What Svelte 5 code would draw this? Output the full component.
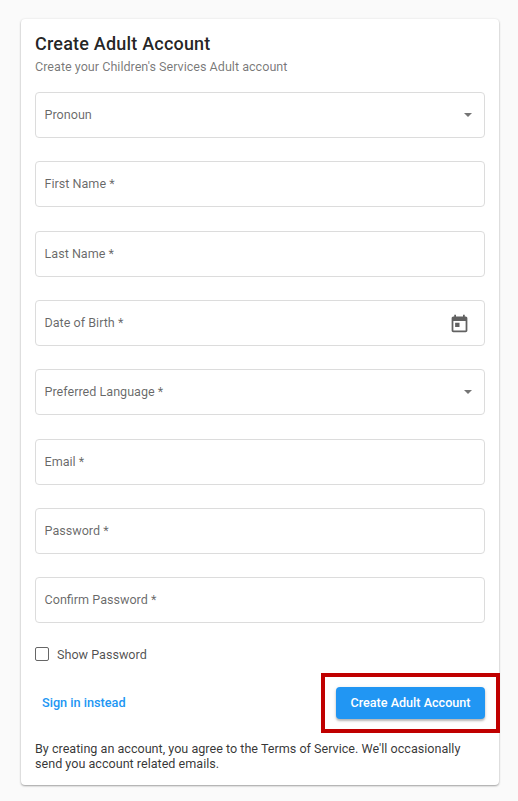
<script>
  const fields = [
    { label: "Pronoun", icon: "caret" },
    { label: "First Name *" },
    { label: "Last Name *" },
    { label: "Date of Birth *", icon: "calendar" },
    { label: "Preferred Language *", icon: "caret" },
    { label: "Email *" },
    { label: "Password *" },
    { label: "Confirm Password *" }
  ];
</script>

<div class="page">
  <main class="card">
    <h1>Create Adult Account</h1>
    <p class="sub">Create your Children's Services Adult account</p>

    <div class="fields">
      {#each fields as field}
        <div class="field">
          <span class="label">{field.label}</span>
          {#if field.icon === "caret"}
            <span class="caret"></span>
          {:else if field.icon === "calendar"}
            <svg class="calendar" viewBox="0 0 24 24" width="21" height="21">
              <path fill="#616161" d="M19 4h-1V2h-2v2H8V2H6v2H5c-1.1 0-2 .9-2 2v14c0 1.1.9 2 2 2h14c1.1 0 2-.9 2-2V6c0-1.1-.9-2-2-2zm0 16H5V9h14v11zM7 11h5v5H7z" />
            </svg>
          {/if}
        </div>
      {/each}
    </div>

    <label class="check">
      <span class="box"></span>
      <span>Show Password</span>
    </label>

    <div class="actions">
      <a class="signin" href="#signin">Sign in instead</a>
      <button class="primary">Create Adult Account</button>
      <div class="highlight"></div>
    </div>

    <p class="terms">By creating an account, you agree to the Terms of Service. We'll occasionally send you account related emails.</p>
  </main>
</div>

<style>
  :global(body) {
    background: #fafafa;
  }

  .page {
    height: 801px;
    box-sizing: border-box;
    padding: 19px 19px 0 21px;
    font-family: Roboto, sans-serif;
    overflow: hidden;
  }

  .card {
    box-sizing: border-box;
    height: 766px;
    padding: 14px 14px 0 14px;
    background: #fff;
    border-radius: 4px;
    box-shadow: 0 1px 2px rgba(0, 0, 0, 0.35), 0 0 3px rgba(0, 0, 0, 0.06);
  }

  h1 {
    margin: 0;
    font-size: 18px;
    line-height: 22px;
    font-weight: 500;
    letter-spacing: 0.2px;
    color: rgba(0, 0, 0, 0.87);
  }

  .sub {
    margin: 2px 0 0;
    font-size: 12.6px;
    line-height: 20px;
    color: rgba(0, 0, 0, 0.54);
  }

  .fields {
    display: flex;
    flex-direction: column;
    gap: 23.35px;
    margin-top: 15px;
  }

  .field {
    display: flex;
    align-items: center;
    justify-content: space-between;
    box-sizing: border-box;
    height: 46px;
    padding: 0 12px 1px 8.5px;
    border: 1px solid #dcdcdc;
    border-radius: 4px;
  }

  .label {
    font-size: 12.6px;
    color: rgba(0, 0, 0, 0.6);
  }

  .caret {
    width: 0;
    height: 0;
    margin-top: 1px;
    border-left: 4px solid transparent;
    border-right: 4px solid transparent;
    border-top: 4px solid #757575;
  }

  .calendar {
    margin: 1px 2px 0 0;
  }

  .check {
    display: flex;
    align-items: center;
    gap: 8px;
    margin-top: 23.55px;
    font-size: 12.6px;
    color: rgba(0, 0, 0, 0.7);
  }

  .box {
    box-sizing: border-box;
    width: 14px;
    height: 14px;
    border: 1px solid #666;
    border-radius: 2px;
  }

  .actions {
    position: relative;
    display: flex;
    align-items: center;
    justify-content: space-between;
    margin-top: 25px;
    height: 32px;
  }

  .signin {
    margin-left: 7px;
    font-size: 12.7px;
    font-weight: 500;
    color: #2196f3;
    text-decoration: none;
  }

  .primary {
    box-sizing: border-box;
    width: 149px;
    height: 32px;
    padding: 0;
    border: 0;
    border-radius: 4px;
    background: #2196f3;
    color: #fff;
    font-family: inherit;
    font-size: 12.6px;
    font-weight: 500;
    box-shadow: 0 2px 2px rgba(0, 0, 0, 0.22), 0 1px 4px rgba(0, 0, 0, 0.12);
  }

  /* red annotation box drawn over the screenshot */
  .highlight {
    position: absolute;
    left: 286px;
    top: -14px;
    box-sizing: border-box;
    width: 179px;
    height: 60px;
    border: 4px solid #c00000;
    pointer-events: none;
  }

  .terms {
    margin: 22px 0 0;
    font-size: 12.6px;
    line-height: 15px;
    color: rgba(0, 0, 0, 0.8);
  }
</style>
